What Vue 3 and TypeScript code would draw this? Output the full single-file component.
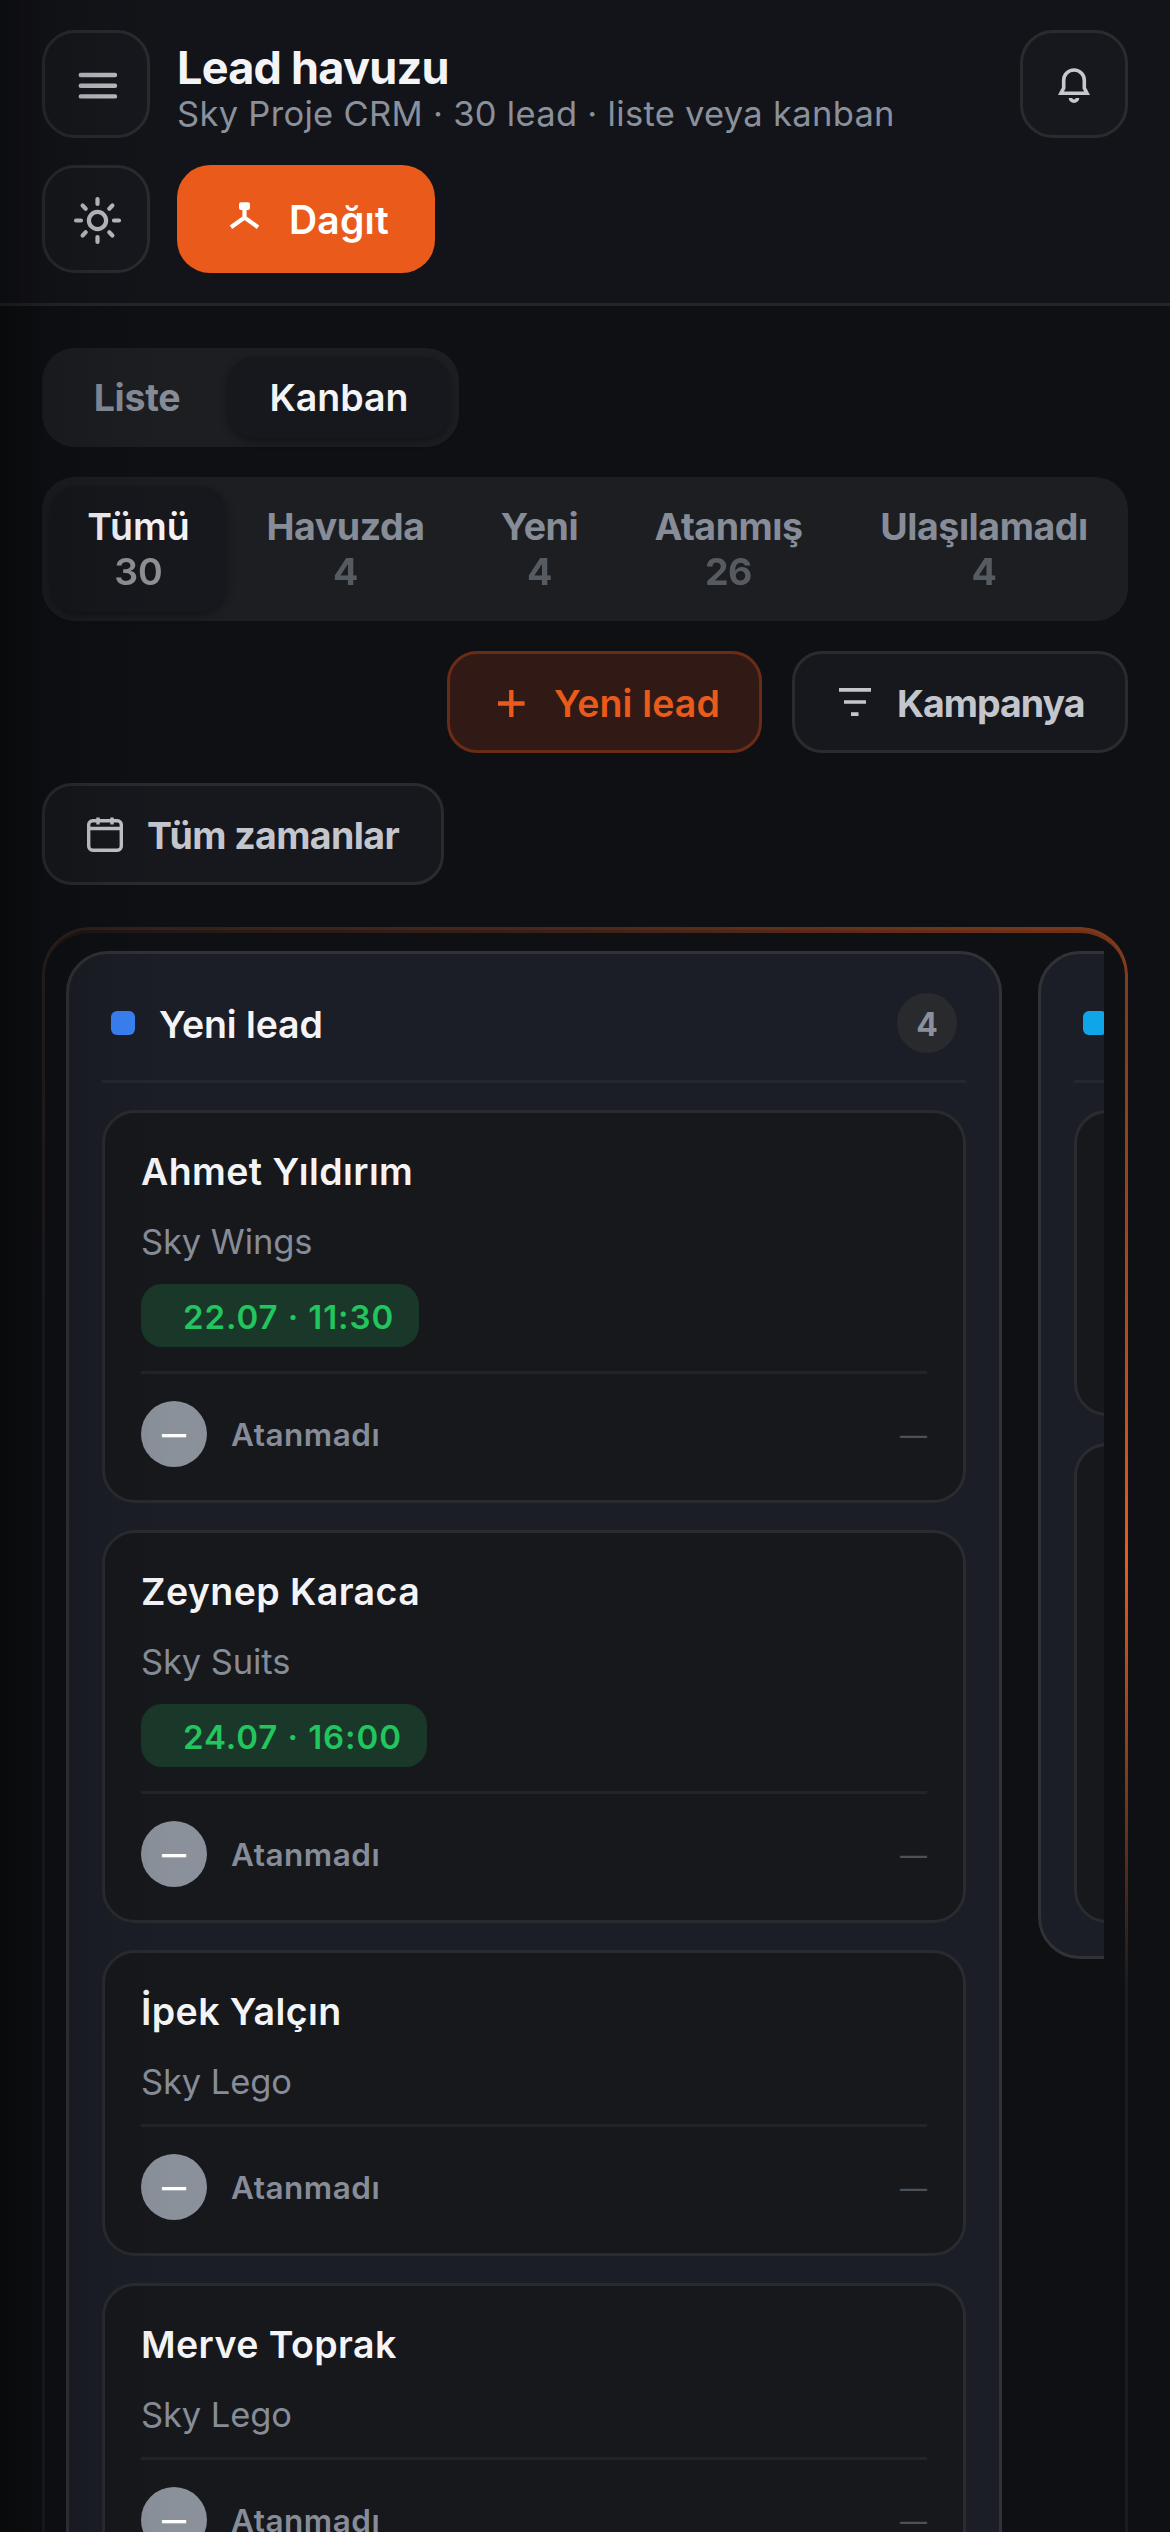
<script setup lang="ts">
interface Lead {
  name: string
  project: string
  slot?: string
}
interface Tab {
  label: string
  count: number
  width: number
}

const tabs: Tab[] = [
  { label: 'Tümü', count: 30, width: 175 },
  { label: 'Havuzda', count: 4, width: 227 },
  { label: 'Yeni', count: 4, width: 149 },
  { label: 'Atanmış', count: 26, width: 217 },
  { label: 'Ulaşılamadı', count: 4, width: 282 },
]

const leads: Lead[] = [
  { name: 'Ahmet Yıldırım', project: 'Sky Wings', slot: '22.07 · 11:30' },
  { name: 'Zeynep Karaca', project: 'Sky Suits', slot: '24.07 · 16:00' },
  { name: 'İpek Yalçın', project: 'Sky Lego' },
  { name: 'Merve Toprak', project: 'Sky Lego' },
]

// Card heights in the lane that only peeks in from the right
const peekCards: number[] = [306, 480]
</script>

<template>
  <div class="page">
    <header class="topbar">
      <div class="row">
        <button class="icon-btn">
          <svg width="54" height="54" viewBox="0 0 54 54" fill="none" stroke="currentColor" stroke-width="4.4" stroke-linecap="round">
            <path d="M11.8 18H46M11.8 28.7H46M11.8 39.4H46" />
          </svg>
        </button>
        <div class="heading">
          <h1>Lead havuzu</h1>
          <p>Sky Proje CRM · 30 lead · liste veya kanban</p>
        </div>
        <button class="icon-btn bell">
          <svg width="54" height="54" viewBox="0 0 54 54" fill="none" stroke="currentColor" stroke-width="3.6">
            <path d="M14 36.2L16.7 31V23.3a10.3 10.3 0 0 1 20.6 0V31L40 36.2Z" />
            <path d="M23.5 41a3.5 3.2 0 0 0 7 0" />
          </svg>
        </button>
      </div>
      <div class="row">
        <button class="icon-btn">
          <svg width="54" height="54" viewBox="0 0 54 54" fill="none" stroke="currentColor" stroke-width="4.2" stroke-linecap="round">
            <circle cx="28.5" cy="28.5" r="8.6" />
            <path d="M28.5 7v5M28.5 45v5M7 28.5h5M45 28.5h5M13.6 13.6l3.1 3.1M40.3 40.3l3.1 3.1M43.4 13.6l-3.1 3.1M16.7 40.3l-3.1 3.1" />
          </svg>
        </button>
        <button class="primary">
          <svg width="45" height="45" viewBox="0 0 45 45" fill="none" stroke="currentColor" stroke-width="4.2">
            <rect x="17" y="5.2" width="11" height="7.8" rx="2" fill="currentColor" stroke="none" />
            <path d="M22.5 12v9M9 30.2l13.5-9.6L36 30.2" />
          </svg>
          <span>Dağıt</span>
        </button>
      </div>
    </header>

    <main class="content">
      <div class="segment">
        <button class="seg">Liste</button>
        <button class="seg active">Kanban</button>
      </div>

      <nav class="tabs">
        <button
          v-for="(tab, i) in tabs"
          :key="tab.label"
          class="tab"
          :class="{ active: i === 0 }"
          :style="{ width: tab.width + 'px' }"
        >
          <span>{{ tab.label }}</span>
          <span class="num">{{ tab.count }}</span>
        </button>
      </nav>

      <div class="actions">
        <button class="btn accent">
          <svg width="42" height="42" viewBox="0 0 42 42" fill="none" stroke="currentColor" stroke-width="4.4">
            <path d="M22.3 9v27M9 22.5h26.6" />
          </svg>
          <span>Yeni lead</span>
        </button>
        <button class="btn filter">
          <svg width="42" height="42" viewBox="0 0 42 42" fill="none" stroke="currentColor" stroke-width="3.7">
            <path d="M5 8.8h32M10 21h22M17 33.2h7.5" />
          </svg>
          <span>Kampanya</span>
        </button>
      </div>
      <div class="dates">
        <button class="btn range">
          <svg width="42" height="42" viewBox="0 0 42 42" fill="none" stroke="currentColor" stroke-width="3.4">
            <rect x="4.7" y="7.7" width="32.6" height="29.6" rx="4" />
            <path d="M4.7 15.5h32.6M14 4.5v7M28 4.5v7" />
          </svg>
          <span>Tüm zamanlar</span>
        </button>
      </div>

      <section class="board">
        <div class="lanes">
          <div class="lane">
            <div class="lane-head">
              <i class="dot"></i>
              <h2>Yeni lead</h2>
              <b class="badge">{{ leads.length }}</b>
            </div>
            <article v-for="lead in leads" :key="lead.name" class="card">
              <h3>{{ lead.name }}</h3>
              <p class="project">{{ lead.project }}</p>
              <div v-if="lead.slot" class="chip">{{ lead.slot }}</div>
              <footer class="foot">
                <span class="avatar">—</span>
                <span class="owner">Atanmadı</span>
                <span class="none">—</span>
              </footer>
            </article>
          </div>
          <div class="lane">
            <div class="lane-head">
              <i class="dot sky"></i>
            </div>
            <article v-for="h in peekCards" :key="h" class="card" :style="{ height: h + 'px' }"></article>
          </div>
        </div>
      </section>
    </main>
    <div class="edge-shade"></div>
  </div>
</template>

<style>
html,
body {
  background: #0f1014;
}
</style>

<style scoped>
.page {
  position: relative;
  width: 1170px;
  height: 2532px;
  overflow: hidden;
  background: #0f1014;
  color: #f4f4f6;
  font-family: Inter, 'Liberation Sans', sans-serif;
}
.page * {
  box-sizing: border-box;
}
h1,
h2,
h3,
p {
  margin: 0;
}
button {
  margin: 0;
  padding: 0;
  border: 0;
  background: none;
  color: inherit;
  font: inherit;
}
svg {
  display: block;
  flex: none;
}
.edge-shade {
  position: absolute;
  inset: 0 auto 0 0;
  width: 170px;
  background: linear-gradient(90deg, rgba(0, 0, 0, 0.38), rgba(0, 0, 0, 0.15) 27%, rgba(0, 0, 0, 0.06) 60%, transparent);
  pointer-events: none;
}
.topbar {
  display: flex;
  flex-direction: column;
  gap: 27px;
  height: 306px;
  padding: 30px 42px 0;
  background: #131419;
  border-bottom: 3px solid #25262b;
}
.row {
  display: flex;
  gap: 27px;
}
.icon-btn {
  display: flex;
  flex: none;
  align-items: center;
  justify-content: center;
  width: 108px;
  height: 108px;
  background: #17181d;
  border: 3px solid #2a2b2f;
  border-radius: 33px;
  color: #bcbdc4;
}
.bell {
  color: #c6c8cd;
}
.heading {
  flex: 1;
  padding-top: 10.5px;
}
h1 {
  font-size: 45px;
  line-height: 54px;
  font-weight: 700;
  letter-spacing: -0.75px;
  white-space: nowrap;
}
.heading p {
  color: #8a919c;
  font-size: 34.5px;
  line-height: 38px;
  letter-spacing: 0.3px;
  white-space: nowrap;
}
.primary {
  display: flex;
  align-items: center;
  gap: 22px;
  width: 258px;
  height: 108px;
  padding-left: 45px;
  background: #ea5b1b;
  border-radius: 33px;
  color: #fff;
  font-size: 39px;
  font-weight: 600;
  letter-spacing: 0.2px;
}
.content {
  display: flex;
  flex-direction: column;
  padding: 42px 42px 0;
}
.segment {
  display: flex;
  width: 417px;
  height: 99px;
  padding: 9px;
  background: #1d1e22;
  border-radius: 33px;
  font-size: 37.5px;
}
.seg {
  width: 177px;
  padding-right: 5px;
  color: #868d98;
  font-weight: 700;
  letter-spacing: -0.3px;
}
.seg.active {
  width: 222px;
  padding-right: 0;
}
.seg.active,
.tab.active {
  background: #17181d;
  border-radius: 26px;
  box-shadow: 0 3px 8px rgba(0, 0, 0, 0.38);
  color: #f4f4f6;
  font-weight: 600;
  letter-spacing: 0;
}
.tabs {
  display: flex;
  gap: 6px;
  height: 144px;
  margin-top: 30px;
  padding: 9px;
  background: #1d1e22;
  border-radius: 33px;
}
.tab {
  display: flex;
  flex: none;
  flex-direction: column;
  align-items: center;
  justify-content: center;
  color: #868d98;
  font-size: 37.5px;
  line-height: 45px;
  font-weight: 700;
  letter-spacing: -0.45px;
}
.num {
  opacity: 0.55;
}
.actions,
.dates {
  display: flex;
  gap: 30px;
  margin-top: 30px;
}
.actions {
  justify-content: flex-end;
}
.btn {
  display: flex;
  align-items: center;
  gap: 21px;
  height: 102px;
  padding-left: 39px;
  background: #17181d;
  border: 3px solid #2a2b2f;
  border-radius: 30px;
  color: #c4c6cd;
  font-size: 37.5px;
  font-weight: 700;
  white-space: nowrap;
}
.btn span {
  padding-top: 2px;
}
.accent {
  gap: 23px;
  width: 315px;
  background: #311a15;
  border-color: #6a2c17;
  color: #ea5b1b;
  font-weight: 600;
  letter-spacing: 0.15px;
}
.filter {
  width: 336px;
  letter-spacing: -1px;
}
.range {
  width: 402px;
  letter-spacing: -0.6px;
}
.board {
  position: relative;
  margin-top: 42px;
  padding: 21px;
  border: 3px solid #1b1c20;
  border-radius: 48px;
}
.board::before {
  content: '';
  position: absolute;
  inset: -3px;
  padding: 6px 3px 3px;
  border-radius: 48px;
  background: conic-gradient(
    from -50deg,
    rgba(234, 91, 27, 0) 0deg,
    rgba(234, 91, 27, 0.22) 50deg,
    rgba(234, 91, 27, 0.47) 82deg,
    #ea5b1b 117deg,
    rgba(234, 91, 27, 0) 160deg
  );
  mask: linear-gradient(#000 0 0) content-box exclude, linear-gradient(#000 0 0);
  pointer-events: none;
}
.lanes {
  display: flex;
  align-items: flex-start;
  gap: 36px;
  overflow: hidden;
}
.lane {
  display: flex;
  flex: none;
  flex-direction: column;
  gap: 27px;
  width: 936px;
  padding: 39px 33px 33px;
  background: #1b1e26;
  border: 3px solid #303236;
  border-radius: 42px;
}
.lane-head {
  display: flex;
  align-items: center;
  height: 90px;
  padding: 0 9px 27px;
  border-bottom: 3px solid #25272e;
}
.dot {
  width: 24px;
  height: 24px;
  border-radius: 6px;
  background: #3b82f6;
}
.dot.sky {
  background: #0ea5e9;
}
h2 {
  flex: 1;
  margin-left: 24px;
  padding-top: 2px;
  font-size: 37.5px;
  font-weight: 600;
  letter-spacing: -0.1px;
}
.badge {
  width: 60px;
  height: 60px;
  border-radius: 50%;
  background: #282a2e;
  color: #8a919c;
  font-size: 32px;
  line-height: 63px;
  font-weight: 700;
  text-align: center;
}
.card {
  padding: 33px 36px;
  background: #17181c;
  border: 3px solid #2a2b2f;
  border-radius: 33px;
}
h3 {
  height: 51px;
  font-size: 37.5px;
  line-height: 51px;
  font-weight: 600;
  letter-spacing: 0.42px;
}
.project {
  height: 45px;
  margin-top: 22px;
  color: #868d98;
  font-size: 34.5px;
  line-height: 45px;
  letter-spacing: -0.1px;
}
.chip {
  width: fit-content;
  height: 63px;
  margin-top: 20px;
  padding: 0 25px 0 42px;
  border-radius: 21px;
  background: #1a3829;
  color: #22c55e;
  font-size: 33px;
  line-height: 66px;
  font-weight: 600;
  letter-spacing: 0.92px;
}
.foot {
  display: flex;
  align-items: center;
  height: 96px;
  margin-top: 20px;
  padding-top: 27px;
  border-top: 3px solid #232428;
}
.chip + .foot {
  margin-top: 24px;
}
.avatar {
  width: 66px;
  height: 66px;
  border-radius: 50%;
  background: #8b919b;
  color: #fff;
  font-size: 24px;
  line-height: 67px;
  font-weight: 800;
  text-align: center;
}
.owner {
  flex: 1;
  margin-left: 24px;
  padding-top: 1px;
  color: #868d98;
  font-size: 31.5px;
  font-weight: 600;
  letter-spacing: 0.5px;
}
.none {
  padding-top: 2px;
  color: #4b5159;
  font-size: 27px;
}
</style>
